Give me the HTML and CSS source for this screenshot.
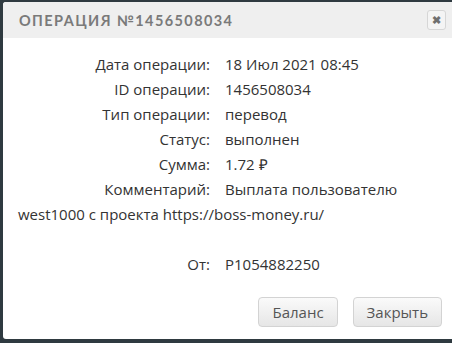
FILE: index.html
```html
<!DOCTYPE html>
<html lang="ru">
<head>
  <meta charset="UTF-8">
  <title>Операция №1456508034</title>
  <link rel="stylesheet" href="styles.css">
</head>
<body>
  <div class="dialog">
    <div class="dialog-head">
      <span class="dialog-title">Операция №1456508034</span>
      <button class="dialog-close" title="Закрыть">&#10006;</button>
    </div>
    <div class="dialog-body">
      <div class="row"><span class="label">Дата операции:</span><span class="value">18 Июл 2021 08:45</span></div>
      <div class="row"><span class="label">ID операции:</span><span class="value">1456508034</span></div>
      <div class="row"><span class="label">Тип операции:</span><span class="value">перевод</span></div>
      <div class="row"><span class="label">Статус:</span><span class="value">выполнен</span></div>
      <div class="row"><span class="label">Сумма:</span><span class="value">1.72 &#8381;</span></div>
      <div class="row"><span class="label">Комментарий:</span><span class="value">Выплата пользователю west1000 с проекта https://boss-money.ru/</span><br>&nbsp;</div>
      <div class="row"><span class="label">От:</span><span class="value">P1054882250</span></div>
    </div>
    <div class="dialog-foot">
      <button class="btn">Баланс</button>
      <button class="btn">Закрыть</button>
    </div>
  </div>
</body>
</html>
```
FILE: styles.css
```css
body {
  margin: 0;
  background: #2f3a40;
  font-family: "Open Sans", Arial, sans-serif;
  color: #333;
}
.dialog {
  margin: 2px 0 0 3px;
  height: 337px;
  background: #fff;
  border-radius: 3px 0 0 3px;
  display: flex;
  flex-direction: column;
}
.dialog-head {
  height: 36px;
  background: #efefef;
  display: flex;
  align-items: center;
  justify-content: space-between;
  padding: 0 6px 0 16px;
  border-radius: 3px 0 0 0;
}
.dialog-title {
  font-family: "Lato", sans-serif;
  font-weight: bold;
  font-size: 14.5px;
  letter-spacing: 1.4px;
  text-transform: uppercase;
  color: #7a7a7a;
}
.dialog-close {
  width: 19px;
  height: 20px;
  padding: 0;
  border: 1px solid #d6d6d6;
  border-radius: 3px;
  background: #f4f4f4;
  color: #6f6f6f;
  font-size: 11px;
  font-weight: bold;
  line-height: 18px;
}
.dialog-body {
  flex: 1;
  padding: 14px 15px 0 15px;
  font-size: 15px;
  line-height: 25px;
}
.label {
  display: inline-block;
  width: 192px;
  text-align: right;
  padding-right: 15px;
}
.dialog-foot {
  display: flex;
  justify-content: flex-end;
  gap: 15px;
  padding: 0 10px 12px 0;
}
.btn {
  height: 30px;
  padding: 0 13px;
  border: 1px solid #d3d3d3;
  border-radius: 4px;
  background: linear-gradient(#fafafa, #e6e6e6);
  color: #555;
  font-family: "Open Sans", Arial, sans-serif;
  font-size: 15px;
}
```
